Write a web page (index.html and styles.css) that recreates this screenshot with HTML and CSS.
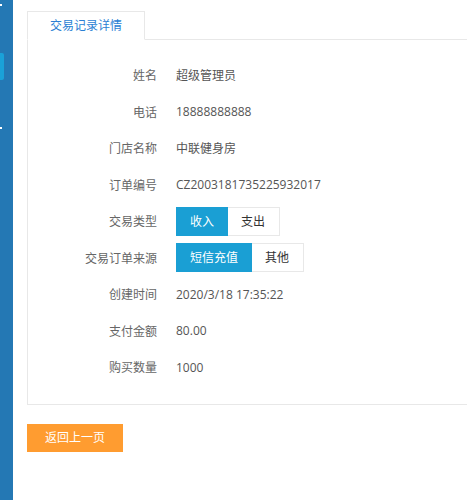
FILE: index.html
```html
<!DOCTYPE html>
<html lang="zh-CN">
<head>
<meta charset="utf-8">
<title>交易记录详情</title>
<link rel="stylesheet" href="styles.css">
</head>
<body>
<div class="layout">
  <aside class="sidebar">
    <span class="dot dot-top"></span>
    <span class="side-active"></span>
    <span class="dot dot-bottom"></span>
  </aside>
  <main class="main">
    <div class="tabs">
      <div class="tab">交易记录详情</div>
      <div class="tab-fill"></div>
    </div>
    <div class="card">
      <div class="row"><div class="label">姓名</div><div class="value">超级管理员</div></div>
      <div class="row"><div class="label">电话</div><div class="value">18888888888</div></div>
      <div class="row"><div class="label">门店名称</div><div class="value">中联健身房</div></div>
      <div class="row"><div class="label">订单编号</div><div class="value">CZ2003181735225932017</div></div>
      <div class="row"><div class="label">交易类型</div>
        <div class="btn-group"><span class="opt active">收入</span><span class="opt">支出</span></div>
      </div>
      <div class="row"><div class="label">交易订单来源</div>
        <div class="btn-group"><span class="opt active">短信充值</span><span class="opt">其他</span></div>
      </div>
      <div class="row"><div class="label">创建时间</div><div class="value">2020/3/18 17:35:22</div></div>
      <div class="row"><div class="label">支付金额</div><div class="value">80.00</div></div>
      <div class="row"><div class="label">购买数量</div><div class="value">1000</div></div>
    </div>
    <div class="actions"><button class="back-btn" type="button">返回上一页</button></div>
  </main>
</div>
</body>
</html>
```

FILE: styles.css
```css
html, body {
  margin: 0;
  padding: 0;
  height: 100%;
  overflow: hidden;
  background: #fff;
}
body {
  font-family: "Open Sans", "Noto Sans CJK SC", sans-serif;
  font-size: 12px;
  color: #555;
}
.layout {
  display: flex;
  height: 100%;
}
.sidebar {
  position: relative;
  flex: 0 0 13px;
  background: #2478b4;
}
.dot {
  position: absolute;
  left: 0;
  width: 2px;
  height: 2px;
  background: #fff;
}
.dot-top { top: 4px; }
.dot-bottom { top: 127px; }
.side-active {
  position: absolute;
  left: 0;
  top: 53px;
  width: 4px;
  height: 27px;
  background: #1aa1d8;
  border-radius: 0 2px 2px 0;
}
.main {
  flex: 1;
  min-width: 0;
  padding: 11px 0 0 14px;
  overflow: hidden;
}
.tabs {
  display: flex;
  margin-right: -40px;
}
.tab {
  height: 27px;
  line-height: 27px;
  padding: 0 22px;
  border: 1px solid #e8e8e8;
  border-bottom-color: #fff;
  color: #2b7fd4;
  white-space: nowrap;
}
.tab-fill {
  flex: 1;
  border-bottom: 1px solid #e8e8e8;
}
.card {
  border: 1px solid #e8e8e8;
  border-top: 0;
  margin-right: -40px;
  padding: 17px 0 18px;
}
.row {
  display: flex;
  align-items: center;
  height: 36.5px;
}
.label {
  width: 129px;
  margin-right: 19px;
  text-align: right;
  color: #666;
  white-space: nowrap;
}
.value {
  color: #555;
  white-space: nowrap;
}
.btn-group {
  display: flex;
}
.opt {
  display: block;
  height: 27px;
  line-height: 27px;
  padding: 0 13px;
  border: 1px solid #e8e8e8;
  color: #333;
  white-space: nowrap;
}
.opt + .opt {
  border-left: 0;
  padding-right: 14px;
}
.opt.active {
  background: #1a9fd4;
  border-color: #1a9fd4;
  color: #fff;
}
.actions {
  padding-top: 19px;
}
.back-btn {
  display: block;
  height: 28px;
  padding: 0 18px;
  border: 0;
  border-radius: 0;
  background: #ff9c30;
  color: #fff;
  font-family: "Open Sans", "Noto Sans CJK SC", sans-serif;
  font-size: 12px;
  line-height: 28px;
  cursor: pointer;
}
```
